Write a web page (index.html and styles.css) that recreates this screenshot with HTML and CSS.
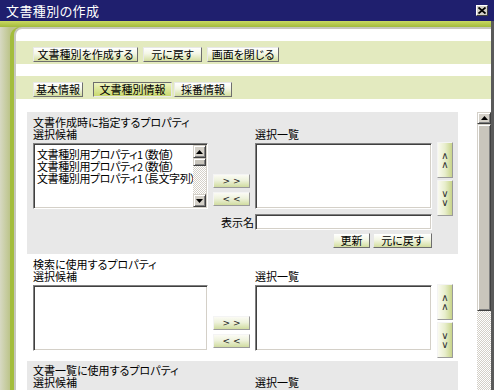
FILE: index.html
```html
<!DOCTYPE html>
<html lang="ja">
<head>
<meta charset="utf-8">
<title>文書種別の作成</title>
<link rel="stylesheet" href="styles.css">
</head>
<body>
<div class="window">
  <div class="titlebar">
    <span class="title">文書種別の作成</span>
    <span class="close"><svg width="8" height="7" viewBox="0 0 8 7"><path d="M0.5 0.5L7.5 6.5M7.5 0.5L0.5 6.5" stroke="#000" stroke-width="1.8"/></svg></span>
  </div>
  <div class="frame">
    <div class="greenline"></div>
    <div class="body">
      <div class="main">
        <div class="inner">
          <div class="band toolbar">
            <button class="btn w-create">文書種別を作成する</button>
            <button class="btn w-back">元に戻す</button>
            <button class="btn w-close">画面を閉じる</button>
          </div>
          <div class="band tabs">
            <button class="btn tab w-tab1">基本情報</button>
            <button class="btn tab active w-tab2">文書種別情報</button>
            <button class="btn tab w-tab3">採番情報</button>
          </div>
          <div class="scrollarea">
            <div class="content">
              <div class="panel gray p1">
                <div class="ptitle">文書作成時に指定するプロパティ</div>
                <div class="pgrid">
                  <div class="lbl">選択候補</div>
                  <div></div>
                  <div class="lbl">選択一覧</div>
                  <div></div>
                  <div class="listbox">
                    <ul class="items">
                      <li>文書種別用プロパティ1（数値）</li>
                      <li>文書種別用プロパティ2（数値）</li>
                      <li>文書種別用プロパティ1（長文字列）</li>
                    </ul>
                    <div class="lscroll">
                      <div class="sbtn"><svg width="7" height="4" viewBox="0 0 7 4"><path d="M3.5 0L7 4H0z" fill="#000"/></svg></div>
                      <div class="sthumb small"></div>
                      <div class="strack"></div>
                      <div class="sbtn"><svg width="7" height="4" viewBox="0 0 7 4"><path d="M0 0h7L3.5 4z" fill="#000"/></svg></div>
                    </div>
                  </div>
                  <div class="movebtns">
                    <button class="mbtn">&gt; &gt;</button>
                    <button class="mbtn">&lt; &lt;</button>
                  </div>
                  <div class="listbox"></div>
                  <div class="ordbtns span2">
                    <button class="obtn">∧<br>∧</button>
                    <button class="obtn">∨<br>∨</button>
                  </div>
                  <div class="namerow"><span class="namelbl">表示名</span><input class="textbox" type="text"></div>
                  <div class="actrow">
                    <button class="btn w-upd">更新</button>
                    <button class="btn w-back">元に戻す</button>
                  </div>
                </div>
              </div>
              <div class="panel white p2">
                <div class="ptitle">検索に使用するプロパティ</div>
                <div class="pgrid">
                  <div class="lbl">選択候補</div>
                  <div></div>
                  <div class="lbl">選択一覧</div>
                  <div></div>
                  <div class="listbox"></div>
                  <div class="movebtns">
                    <button class="mbtn">&gt; &gt;</button>
                    <button class="mbtn">&lt; &lt;</button>
                  </div>
                  <div class="listbox"></div>
                  <div class="ordbtns">
                    <button class="obtn">∧<br>∧</button>
                    <button class="obtn">∨<br>∨</button>
                  </div>
                </div>
              </div>
              <div class="panel gray p3">
                <div class="ptitle">文書一覧に使用するプロパティ</div>
                <div class="pgrid">
                  <div class="lbl">選択候補</div>
                  <div></div>
                  <div class="lbl">選択一覧</div>
                  <div></div>
                  <div class="listbox"></div>
                  <div class="movebtns">
                    <button class="mbtn">&gt; &gt;</button>
                    <button class="mbtn">&lt; &lt;</button>
                  </div>
                  <div class="listbox"></div>
                  <div class="ordbtns">
                    <button class="obtn">∧<br>∧</button>
                    <button class="obtn">∨<br>∨</button>
                  </div>
                </div>
              </div>
            </div>
            <div class="vscroll">
              <div class="sbtn big"><svg width="7" height="4" viewBox="0 0 7 4"><path d="M3.5 0L7 4H0z" fill="#000"/></svg></div>
              <div class="sthumb page"></div>
              <div class="strack"></div>
              <div class="sbtn big"><svg width="7" height="4" viewBox="0 0 7 4"><path d="M0 0h7L3.5 4z" fill="#000"/></svg></div>
            </div>
          </div>
        </div>
      </div>
    </div>
  </div>
</div>
</body>
</html>
```

FILE: styles.css
```css
* { box-sizing: border-box; }
html, body { margin: 0; padding: 0; }
body {
  font-family: "Noto Sans CJK JP", sans-serif;
  font-size: 11px;
  font-feature-settings: "palt";
  color: #000;
  background: #fff;
}
.window {
  width: 494px;
  height: 390px;
  display: flex;
  flex-direction: column;
  overflow: hidden;
}
.titlebar {
  height: 21px;
  flex: none;
  background: #1f1f6e;
  display: flex;
  align-items: center;
  padding: 0 6px 0 6px;
}
.title {
  color: #fff;
  font-size: 13px;
  line-height: 15px;
  letter-spacing: 0.4px;
}
.close {
  margin-left: auto;
  width: 12px;
  height: 11px;
  background: #d4d0c8;
  border: 1px solid;
  border-color: #fff #404040 #404040 #fff;
  display: flex;
  align-items: center;
  justify-content: center;
}
.frame {
  flex: 1;
  display: flex;
  flex-direction: column;
  border-right: 3px solid #5a5a5a;
}
.greenline {
  height: 6px;
  flex: none;
  background: linear-gradient(#c9d962, #a2bb3c);
}
.body {
  flex: 1;
  display: flex;
  background: linear-gradient(90deg, #d7d9c2, #bcc48a 10px);
}
.main {
  flex: 1;
  display: flex;
  margin-left: 10px;
  border-left: 4px solid #a3bd3c;
  border-top-left-radius: 10px;
  background: #a3bd3c;
}
.inner {
  flex: 1;
  display: flex;
  flex-direction: column;
  background: #fff;
  border-top: 2px solid #c6c7bd;
  border-left: 2px solid #c6c7bd;
  border-bottom: 2px solid #8c8c8c;
  border-top-left-radius: 8px;
  padding-top: 12px;
}
.band {
  flex: none;
  height: 23px;
  background: #e3eabf;
  display: flex;
  align-items: flex-start;
  padding: 6px 0 0 17px;
  gap: 5px;
}
.toolbar { margin-bottom: 12px; }
.tabs { margin-bottom: 13px; gap: 0; }

.btn {
  height: 15px;
  padding: 0;
  margin: 0;
  font-family: inherit;
  font-size: 11px;
  font-feature-settings: "palt";
  line-height: 13px;
  color: #000;
  background: linear-gradient(#ffffff, #f3f6e4 45%, #d3de9f);
  border: 1px solid;
  border-color: #e8e8e8 #6e6e6e #6e6e6e #e8e8e8;
  text-align: center;
}
.w-create { width: 105px; }
.w-back { width: 59px; }
.w-close { width: 72px; }
.w-upd { width: 37px; }
.w-tab1 { width: 50px; margin-right: 10px; }
.w-tab2 { width: 79px; margin-right: 2px; }
.w-tab3 { width: 58px; }
.tab.active {
  background: linear-gradient(#eef4c2, #c8d86e);
  border-color: #6e6e6e #e8e8e8 #e8e8e8 #6e6e6e;
}

.scrollarea {
  flex: 1;
  min-height: 0;
  display: flex;
}
.content {
  flex: 1;
  overflow: hidden;
  padding-left: 11px;
}
.panel {
  width: 431px;
  padding: 5px 5px 3px 6px;
}
.gray { background: #e8e8e8; }
.white { background: #fff; }
.p1 { padding-bottom: 6px; }
.p3 { padding-top: 4px; }
.ptitle {
  line-height: 11px;
  white-space: nowrap;
}
.pgrid {
  display: grid;
  grid-template-columns: 175px 37px 177px 16px;
  column-gap: 5px;
  align-items: start;
}
.lbl {
  line-height: 11px;
  margin-top: 1px;
  margin-bottom: 3px;
}
.listbox {
  height: 66px;
  background: #fff;
  border: 1px solid;
  border-color: #808080 #fff #fff #808080;
  box-shadow: inset 1px 1px #404040, inset -1px -1px #d4d0c8;
  display: flex;
  padding: 1px;
}
.items {
  flex: 1;
  list-style: none;
  margin: 0;
  padding: 3px 0 0 2px;
  line-height: 12px;
  letter-spacing: -0.4px;
  white-space: nowrap;
  overflow: hidden;
}
.lscroll {
  width: 13px;
  display: flex;
  flex-direction: column;
}
.sbtn {
  flex: none;
  height: 13px;
  background: #d4d0c8;
  border: 1px solid;
  border-color: #d4d0c8 #404040 #404040 #d4d0c8;
  box-shadow: inset 1px 1px #fff, inset -1px -1px #808080;
  display: flex;
  align-items: center;
  justify-content: center;
}
.sbtn.big { height: 12px; }
.sthumb {
  flex: none;
  background: #c9c5bc;
  border: 1px solid;
  border-color: #d4d0c8 #404040 #404040 #d4d0c8;
  box-shadow: inset 1px 1px #fff, inset -1px -1px #808080;
}
.sthumb.small { height: 8px; }
.sthumb.page { height: 187px; }
.strack {
  flex: 1;
  background: conic-gradient(#d4d0c8 25%, #fff 0 50%, #d4d0c8 0 75%, #fff 0) 0 0 / 2px 2px;
}
.vscroll {
  width: 14px;
  display: flex;
  flex-direction: column;
}
.movebtns {
  height: 66px;
  display: flex;
  flex-direction: column;
  justify-content: flex-end;
  gap: 4px;
  padding-bottom: 3px;
}
.mbtn {
  width: 37px;
  height: 14px;
  padding: 0;
  font-family: "DejaVu Sans", sans-serif;
  font-size: 9px;
  line-height: 12px;
  color: #222;
  background: linear-gradient(#fbfbf4, #eef2dc 45%, #d0dca0);
  border: 1px solid;
  border-color: #f4f4f4 #9a9a9a #9a9a9a #f4f4f4;
}
.ordbtns {
  margin-top: -1px;
  display: flex;
  flex-direction: column;
  gap: 2px;
}
.span2 { grid-row: span 2; }
.obtn {
  width: 16px;
  height: 36px;
  padding: 0;
  font-family: "DejaVu Sans", sans-serif;
  font-size: 10px;
  line-height: 9px;
  color: #333;
  background: linear-gradient(90deg, #fafaf0, #e8eecc 50%, #c8d48a);
  border: 1px solid;
  border-color: #f4f4f4 #9a9a9a #9a9a9a #f4f4f4;
}
.namerow {
  grid-column: 1 / 4;
  display: flex;
  justify-content: flex-end;
  align-items: center;
  margin-top: 5px;
  line-height: 11px;
}
.namelbl { margin-right: 1px; }
.textbox {
  width: 177px;
  height: 16px;
  margin: 0;
  padding: 0;
  background: #fff;
  border: 1px solid;
  border-color: #808080 #fff #fff #808080;
  box-shadow: inset 1px 1px #404040, inset -1px -1px #d4d0c8;
  outline: none;
}
.actrow {
  grid-column: 1 / 4;
  display: flex;
  justify-content: flex-end;
  gap: 3px;
  margin-top: 3px;
}
```
